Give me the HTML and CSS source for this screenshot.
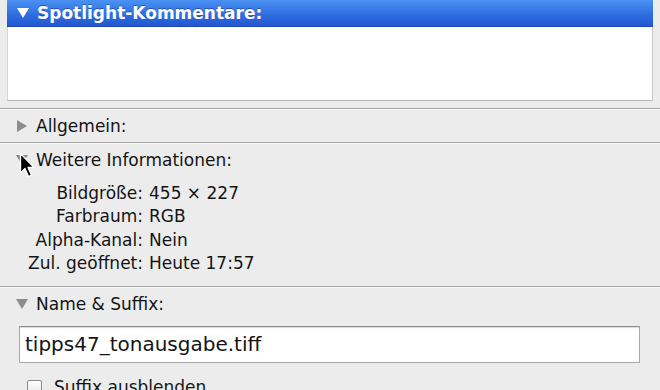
FILE: index.html
```html
<!DOCTYPE html>
<html>
<head>
  <title>Informationen</title>
  <link rel="stylesheet" href="styles.css">
</head>
<body>
  <div class="comments">
    <div class="comments-head">
      <svg class="tri" width="12" height="12" viewBox="0 0 12 12"><path d="M0 1 H12 L6 11 Z" fill="#fff"/></svg>
      Spotlight-Kommentare:
    </div>
    <div class="comments-body"></div>
  </div>

  <div class="section">
    <div class="section-head">
      <svg class="tri" width="12" height="12" viewBox="0 0 12 12"><path d="M1 0 V12 L11 6 Z" fill="#8c8c8c"/></svg>
      Allgemein:
    </div>
  </div>

  <div class="section">
    <div class="section-head">
      <svg class="tri" width="12" height="12" viewBox="0 0 12 12"><path d="M0 1 H12 L6 11 Z" fill="#8c8c8c"/></svg>
      Weitere Informationen:
    </div>
    <div class="info">
      <span class="key">Bildgröße:</span><span>455 × 227</span>
      <span class="key">Farbraum:</span><span>RGB</span>
      <span class="key">Alpha-Kanal:</span><span>Nein</span>
      <span class="key">Zul. geöffnet:</span><span>Heute 17:57</span>
    </div>
    <svg class="cursor" width="18" height="28" viewBox="0 0 18 28">
      <path d="M1.5 1.5 V21 L6 16.5 L9.5 24.5 L12.5 23.2 L9 15.5 H15 Z" fill="#000" stroke="#fff" stroke-width="1.3" stroke-linejoin="round"/>
    </svg>
  </div>

  <div class="section">
    <div class="section-head">
      <svg class="tri" width="12" height="12" viewBox="0 0 12 12"><path d="M0 1 H12 L6 11 Z" fill="#8c8c8c"/></svg>
      Name &amp; Suffix:
    </div>
    <div class="name-field">tipps47_tonausgabe.tiff</div>
    <label class="check"><span class="box"></span>Suffix ausblenden</label>
  </div>
</body>
</html>
```

FILE: styles.css
```css
body {
  margin: 0;
  background: #ececec;
  font-family: "DejaVu Sans", "Liberation Sans", sans-serif;
  font-size: 17px;
  color: #141414;
  overflow: hidden;
}

.comments {
  margin: 0 7px 7px 7px;
}

.comments-head {
  height: 27px;
  display: flex;
  align-items: center;
  gap: 8px;
  padding-left: 10px;
  background: linear-gradient(to bottom, #4a92f2, #2d6be0 60%, #2456cf);
  color: #fff;
  font-weight: bold;
  font-size: 17px;
  text-shadow: 0 -1px 0 rgba(0, 0, 40, 0.35);
  border-bottom: 1px solid #1c46b0;
  box-sizing: border-box;
}

.comments-body {
  height: 73px;
  background: #fff;
  border-bottom: 1px solid #b5b5b5;
  border-right: 1px solid #c8c8c8;
  border-left: 1px solid #d4d4d4;
}

.section {
  position: relative;
  border-top: 1px solid #a3a3a3;
  box-shadow: inset 0 1px 0 #fafafa;
  padding: 5px 0 4px 0;
}

.section-head {
  height: 24px;
  display: flex;
  align-items: center;
  gap: 8px;
  padding-left: 16px;
}

.tri {
  flex: none;
}

.info {
  display: grid;
  grid-template-columns: 143px auto;
  column-gap: 6px;
  line-height: 23.3px;
  margin: 10px 0 7px 0;
}

.key {
  text-align: right;
}

.cursor {
  position: absolute;
  left: 19px;
  top: 9px;
}

.name-field {
  margin: 10px 20px 0 19px;
  height: 37px;
  box-sizing: border-box;
  background: #fff;
  border: 1px solid #a9a9a9;
  border-top-color: #8e8e8e;
  box-shadow: inset 0 1px 1px rgba(0, 0, 0, 0.15);
  padding: 3px 5px 0 5px;
  font-size: 20px;
  line-height: 28px;
}

.check {
  display: flex;
  align-items: center;
  gap: 12px;
  margin: 14px 0 0 27px;
  font-size: 17px;
}

.box {
  width: 13px;
  height: 13px;
  border: 1px solid #8a8a8a;
  border-radius: 2px;
  background: linear-gradient(#fff, #e6e6e6);
}
```
